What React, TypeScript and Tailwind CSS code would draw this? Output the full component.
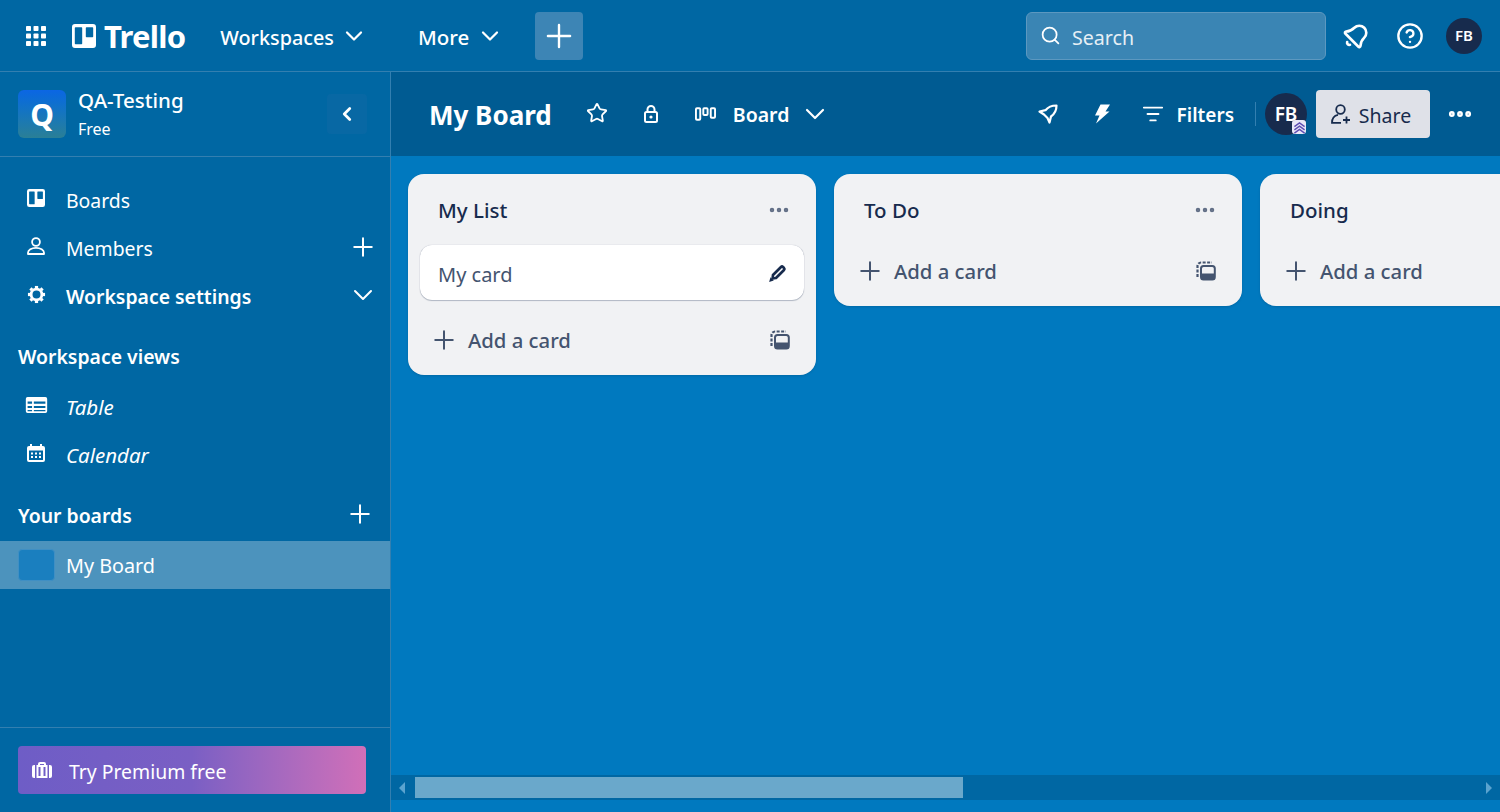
import { Bell, ChevronDown, ChevronLeft, CircleHelp, Ellipsis, ListFilter, Plus, Search, Star } from 'lucide-react'

function TrelloMark({ className }: { className: string }) {
  return (
    <svg viewBox="0 0 24 24" className={className} fill="currentColor">
      <path fillRule="evenodd" d="M3 0h18a3 3 0 0 1 3 3v18a3 3 0 0 1-3 3H3a3 3 0 0 1-3-3V3a3 3 0 0 1 3-3Zm.5 3.200a.7.7 0 0 0-.7.7v15.600c0 .4.3.7.7.7h6a.7.7 0 0 0 .7-.7V3.900a.7.7 0 0 0-.7-.7h-6Zm11 0a.7.7 0 0 0-.7.7v8.600c0 .4.3.7.7.7h6a.7.7 0 0 0 .7-.7V3.900a.7.7 0 0 0-.7-.7h-6Z" />
    </svg>
  )
}

function GridIcon() {
  const cells = [0, 7.5, 15]
  return (
    <svg viewBox="0 0 20 20" className="h-[20px] w-[20px]" fill="currentColor">
      {cells.flatMap(y => cells.map(x => <rect key={`${x}-${y}`} x={x} y={y} width="5" height="5" rx="0.8" />))}
    </svg>
  )
}

function TableIcon() {
  return (
    <svg viewBox="0 0 24 18" className="h-[16px] w-[23px]" fill="currentColor">
      <path fillRule="evenodd" d="M2 0h20a2 2 0 0 1 2 2v14a2 2 0 0 1-2 2H2a2 2 0 0 1-2-2V2a2 2 0 0 1 2-2Zm0 5v2.500h5V5H2Zm7 0v2.500h13V5H9Zm-7 5v2.500h5V10H2Zm7 0v2.500h13V10H9Zm-7 4.500V16h5v-1.500H2Zm7 0V16h13v-1.500H9Z" />
    </svg>
  )
}

function CalendarIcon() {
  return (
    <svg viewBox="0 0 18 18" className="h-[18px] w-[18px]" fill="currentColor">
      <path fillRule="evenodd" d="M3 0h2v2h8V0h2v2h1a2 2 0 0 1 2 2v12a2 2 0 0 1-2 2H2a2 2 0 0 1-2-2V4a2 2 0 0 1 2-2h1V0ZM2 6.500V16h14V6.500H2Z" />
      <path d="M4 8.500h2v2H4zM8 8.500h2v2H8zM12 8.500h2v2h-2zM4 12h2v2H4zM8 12h2v2H8zM12 12h2v2h-2z" />
    </svg>
  )
}

function MemberIcon() {
  return (
    <svg viewBox="0 0 18 18" className="h-[18px] w-[18px]" fill="none" stroke="currentColor" strokeWidth="1.800">
      <circle cx="9" cy="5" r="3.900" />
      <path d="M1 17v-1.300C1 13 4.500 10.800 9 10.800s8 2.200 8 4.900V17H1Z" strokeLinejoin="round" />
    </svg>
  )
}

function GearIcon() {
  const spokes = [0, 45, 90, 135, 180, 225, 270, 315]
  return (
    <svg viewBox="0 0 20 20" className="h-[19px] w-[19px]" fill="none" stroke="currentColor">
      <circle cx="10" cy="10" r="5.700" strokeWidth="3" />
      {spokes.map(deg => <path key={deg} d="M10 3.500V1" strokeWidth="3.400" transform={`rotate(${deg} 10 10)`} />)}
    </svg>
  )
}

function TemplateIcon() {
  return (
    <svg viewBox="0 0 20 20" className="h-[20px] w-[20px]" fill="none" stroke="currentColor">
      <path d="M1.500 16V5A3.500 3.500 0 0 1 5 1.500h11" strokeWidth="2.200" strokeDasharray="3 1.500" />
      <rect x="5" y="5" width="13.800" height="13.500" rx="2.500" strokeWidth="2" />
      <path d="M5 12.500h13.800V16a2.500 2.500 0 0 1-2.500 2.500H7.500A2.500 2.500 0 0 1 5 16v-3.500Z" fill="currentColor" stroke="none" />
    </svg>
  )
}

function BriefcaseIcon() {
  return (
    <svg viewBox="0 0 20 16" className="h-[16px] w-[20px]" fill="currentColor">
      <path fillRule="evenodd" d="M6 3V2a2 2 0 0 1 2-2h4a2 2 0 0 1 2 2v1h1.500v13h-11V3H6Zm2-1v1h4V2H8Zm-1.500 3v9h2V5h-2Zm5 0v9h2V5h-2Z" />
      <path d="M0 5a2 2 0 0 1 2-2h1v13H2a2 2 0 0 1-2-2V5ZM17 3h1a2 2 0 0 1 2 2v9a2 2 0 0 1-2 2h-1V3Z" />
    </svg>
  )
}

function BoardViewIcon() {
  return (
    <svg viewBox="0 0 22 14" className="h-[14px] w-[21px]" fill="none" stroke="currentColor" strokeWidth="2">
      <rect x="1" y="1" width="4.500" height="12" rx="1" />
      <rect x="8.700" y="1" width="4.500" height="7" rx="1" />
      <rect x="16.500" y="1" width="4.500" height="10" rx="1" />
    </svg>
  )
}

function PencilIcon() {
  return (
    <svg viewBox="0 0 18 18" className="h-[20px] w-[20px] text-[#172b4d]" fill="none" stroke="currentColor" strokeWidth="2.400" strokeLinejoin="round">
      <path d="M4.500 10.800 11.700 3.600a1.300 1.300 0 0 1 1.800 0l.9.900a1.300 1.300 0 0 1 0 1.800L7.200 13.500 4.200 13.800 4.500 10.800Z" />
      <path d="M1 17 2.300 12.800 5.200 15.700 1 17Z" fill="currentColor" stroke="none" />
    </svg>
  )
}

function LockIcon() {
  return (
    <svg viewBox="0 0 14 18" className="h-[18px] w-[14px]" fill="none" stroke="currentColor" strokeWidth="2">
      <path d="M3.500 7V4.500a3.500 3.500 0 0 1 7 0V7" />
      <rect x="1" y="7" width="12" height="10" rx="1.500" />
      <circle cx="7" cy="12" r="1.600" fill="currentColor" stroke="none" />
    </svg>
  )
}

function RocketIcon() {
  return (
    <svg viewBox="0 0 20 20" className="h-[20px] w-[20px]" fill="none" stroke="currentColor" strokeWidth="2.200" strokeLinejoin="round">
      <path d="M18.500 1.500C14 1.500 10 3 7.500 6.200L1.500 7.500 6 10.500 9.500 14 11.500 18.500 13 12.500C16.500 10 18.500 6 18.500 1.500Z" />
    </svg>
  )
}

function BoltIcon() {
  return (
    <svg viewBox="0 0 16 20" className="h-[20px] w-[16px]" fill="currentColor">
      <path d="M6.500 0.500H16L11.500 7.500H15.500L2 19.500 5.500 11.500H1L6.500 0.500Z" />
    </svg>
  )
}

function ShareIcon() {
  return (
    <svg viewBox="0 0 20 20" className="h-[20px] w-[20px]" fill="none" stroke="currentColor" strokeWidth="1.800">
      <circle cx="9.500" cy="5.500" r="4.300" />
      <path d="M7 10.800C3.500 11.500 1 14 1 18.800h9M15.500 12.500v7M12 16h7" />
    </svg>
  )
}

function SidebarRow({ icon, label, bold, italic, right }: { icon: React.ReactNode; label: string; bold?: boolean; italic?: boolean; right?: React.ReactNode }) {
  return (
    <div className="flex h-12 items-center pr-[11px] pl-[24px]">
      <div className="flex w-[24px] -translate-y-[2px] justify-center">{icon}</div>
      <span className={`ml-[18px] flex-1 ${italic ? 'text-[20.5px] italic' : 'mt-[2px] text-[19.4px]'} ${bold ? 'font-semibold' : ''}`}>{label}</span>
      {right}
    </div>
  )
}

function AddCard({ empty }: { empty?: boolean }) {
  return (
    <div className={`flex h-12 items-center pr-[26px] pl-[21px] text-[#44546f] ${empty ? 'mt-[21px]' : 'mt-[16px]'}`}>
      <Plus className="h-[30px] w-[30px]" strokeWidth={1.6} />
      <span className="ml-[9px] flex-1 text-[20.3px] font-medium">Add a card</span>
      <TemplateIcon />
    </div>
  )
}

function ListHeader({ title, menu = true }: { title: string; menu?: boolean }) {
  return (
    <div className="flex h-[52px] items-center justify-between pt-[20px] pr-[25px] pl-[30px] text-[#172b4d]">
      <span className="mt-[1px] text-[20.5px] font-medium">{title}</span>
      {menu && <Ellipsis className="h-[24px] w-[24px] text-[#626f86]" strokeWidth={2.5} />}
    </div>
  )
}

export default function App() {
  return (
    <div className="flex h-[812px] w-[1500px] flex-col overflow-hidden bg-[#0079bf] text-white" style={{ fontFamily: '"Noto Sans", sans-serif' }}>
      <header className="flex h-[72px] shrink-0 items-center border-b border-[#337fb0] bg-[#0067a3] pr-[18px] pl-[26px]">
        <GridIcon />
        <div className="ml-[26px] flex items-center">
          <TrelloMark className="h-[24px] w-[24px]" />
          <span className="mt-[2px] ml-[8px] text-[31px] leading-none font-bold tracking-tight">Trello</span>
        </div>
        <span className="mt-[4px] ml-[35px] text-[19.8px] font-medium">Workspaces</span>
        <ChevronDown className="ml-[6px] h-[28px] w-[28px]" strokeWidth={1.9} />
        <span className="mt-[4px] ml-[50px] text-[20.5px] font-medium">More</span>
        <ChevronDown className="ml-[7px] h-[28px] w-[28px]" strokeWidth={1.9} />
        <div className="ml-[31px] flex h-12 w-12 items-center justify-center rounded-[4px] bg-[#3d85b5]">
          <Plus className="h-[38px] w-[38px]" strokeWidth={1.5} />
        </div>
        <div className="ml-auto flex h-12 w-[300px] items-center rounded-[6px] border border-[#5c98c0] bg-[#3a85b4] pl-[13px]">
          <Search className="h-[21px] w-[21px]" strokeWidth={2} />
          <span className="mt-[4px] ml-[11px] text-[19.6px] text-[#e6eff5]">Search</span>
        </div>
        <Bell className="ml-[16px] h-[28px] w-[28px] rotate-45" strokeWidth={2.25} />
        <CircleHelp className="ml-[26px] h-[28px] w-[28px]" strokeWidth={2} />
        <div className="ml-[22px] flex h-9 w-9 items-center justify-center rounded-full bg-[#172b4d] text-[15px] font-semibold">FB</div>
      </header>

      <div className="flex min-h-0 flex-1">
        <aside className="flex w-[391px] shrink-0 flex-col border-r border-[#337fb0] bg-[#0067a3]">
          <div className="flex h-[85px] shrink-0 items-center border-b border-[#337fb0] pr-[23px] pl-[18px]">
            <div className="flex h-12 w-12 items-center justify-center rounded-[6px] bg-gradient-to-b from-[#0c66e4] to-[#2a7f96] text-[30px] font-bold">Q</div>
            <div className="ml-[12px] flex-1">
              <div className="-mt-[2px] text-[20.5px] leading-[30px] font-medium">QA-Testing</div>
              <div className="mt-[1px] text-[16px] leading-[26px]">Free</div>
            </div>
            <div className="flex h-10 w-10 items-center justify-center rounded-[4px] bg-[#0868a4]">
              <ChevronLeft className="h-[22px] w-[22px]" strokeWidth={3} />
            </div>
          </div>

          <nav className="mt-[19px] flex flex-col">
            <SidebarRow icon={<TrelloMark className="h-[18px] w-[18px]" />} label="Boards" />
            <SidebarRow icon={<MemberIcon />} label="Members" right={<Plus className="mr-[1px] h-[30px] w-[30px] -translate-y-[1px]" strokeWidth={1.6} />} />
            <SidebarRow icon={<GearIcon />} label="Workspace settings" bold right={<ChevronDown className="h-[32px] w-[32px] -translate-y-[1px]" strokeWidth={1.5} />} />
          </nav>

          <div className="mt-[12px] flex h-12 items-center pt-[2px] pl-[18px] text-[19.4px] font-semibold">Workspace views</div>
          <div className="mt-[3px]">
            <SidebarRow icon={<TableIcon />} label="Table" italic />
            <SidebarRow icon={<CalendarIcon />} label="Calendar" italic />
          </div>

          <div className="mt-[12px] flex h-12 items-center justify-between pr-[15px] pl-[18px] text-[19.4px] font-semibold">
            <span className="mt-[2px]">Your boards</span>
            <Plus className="h-[30px] w-[30px] -translate-y-[1px]" strokeWidth={1.6} />
          </div>
          <div className="mt-[2px] flex h-12 items-center bg-[#4c93bd] pl-[18px]">
            <div className="h-[32px] w-[37px] rounded-[4px] border border-[#3f8fc4] bg-[#1a7fbf]" />
            <span className="mt-[2px] ml-[11px] text-[19.8px]">My Board</span>
          </div>

          <div className="mt-auto flex h-[85px] shrink-0 items-center border-t border-[#337fb0] px-[18px]">
            <div className="flex h-12 w-[348px] items-center rounded-[4px] bg-gradient-to-r from-[#6e5dc6] via-[#7a5fc4] to-[#d16fb8] pl-[14px]">
              <BriefcaseIcon />
              <span className="mt-[3px] ml-[17px] text-[19.4px]">Try Premium free</span>
            </div>
          </div>
        </aside>

        <main className="flex min-w-0 flex-1 flex-col">
          <div className="flex h-[84px] shrink-0 items-center bg-[#005b92] pr-[26px] pl-[38px]">
            <span className="mt-[2px] text-[26px] font-bold">My Board</span>
            <Star className="ml-[34px] h-[22px] w-[22px] -translate-y-[1px]" strokeWidth={2} />
            <div className="ml-[36px]"><LockIcon /></div>
            <div className="ml-[37px]"><BoardViewIcon /></div>
            <span className="mt-[2px] ml-[17px] text-[19.5px] font-semibold">Board</span>
            <ChevronDown className="ml-[10px] h-[32px] w-[32px]" strokeWidth={1.6} />
            <div className="ml-auto"><RocketIcon /></div>
            <div className="ml-[36px]"><BoltIcon /></div>
            <ListFilter className="ml-[32px] h-[22px] w-[22px]" strokeWidth={2} />
            <span className="mt-[2px] ml-[13px] text-[19px] font-semibold">Filters</span>
            <div className="ml-[21px] h-[24px] w-px bg-[#337fb0]" />
            <div className="relative ml-[9px] flex h-[42px] w-[42px] items-center justify-center rounded-full bg-[#172b4d] text-[19px] font-semibold">
              FB
              <span className="absolute right-[1px] bottom-[1px] flex h-[14px] w-[14px] items-center justify-center rounded-[3px] bg-[#e9e7f6]">
                <svg viewBox="0 0 14 14" className="h-[13px] w-[13px] text-[#5e4db2]" fill="none" stroke="currentColor" strokeWidth="1.500">
                  <path d="M1.500 6 7 2l5.500 4M1.500 9.500 7 5.500l5.500 4M1.500 13 7 9l5.500 4" />
                </svg>
              </span>
            </div>
            <div className="ml-[9px] flex h-12 w-[114px] items-center justify-center rounded-[4px] bg-[#dfe1e8] pr-[4px] text-[#172b4d]">
              <ShareIcon />
              <span className="mt-[4px] ml-[8px] text-[19.5px]">Share</span>
            </div>
            <Ellipsis className="ml-[16px] h-[28px] w-[28px]" strokeWidth={3} />
          </div>

          <div className="flex min-h-0 flex-1 items-start gap-[18px] overflow-hidden pt-[18px] pl-[17px]">
            <section className="w-[408px] shrink-0 rounded-[16px] bg-[#f1f2f4] pb-[11px] shadow-sm">
              <ListHeader title="My List" />
              <div className="mx-[12px] mt-[19px] flex h-[55px] items-center justify-between rounded-[12px] bg-white pr-[16px] pl-[18px] shadow-[0_1px_1px_#091e4240,0_0_1px_#091e424f]">
                <span className="mt-[5px] text-[20px] text-[#44546f]">My card</span>
                <PencilIcon />
              </div>
              <AddCard />
            </section>
            <section className="w-[408px] shrink-0 rounded-[16px] bg-[#f1f2f4] pb-[11px] shadow-sm">
              <ListHeader title="To Do" />
              <AddCard empty />
            </section>
            <section className="w-[408px] shrink-0 rounded-[16px] bg-[#f1f2f4] pb-[11px] shadow-sm">
              <ListHeader title="Doing" menu={false} />
              <AddCard empty />
            </section>
          </div>

          <div className="mb-[12px] flex h-[25px] shrink-0 items-center bg-[#0067a3]">
            <span className="ml-[8px] h-0 w-0 border-y-[6px] border-r-[6px] border-y-transparent border-r-[#5ba3cf]" />
            <div className="ml-[10px] h-[21px] w-[548px] bg-[#6aa8cb]" />
            <span className="mr-[8px] ml-auto h-0 w-0 border-y-[6px] border-l-[6px] border-y-transparent border-l-[#5ba3cf]" />
          </div>
        </main>
      </div>
    </div>
  )
}
